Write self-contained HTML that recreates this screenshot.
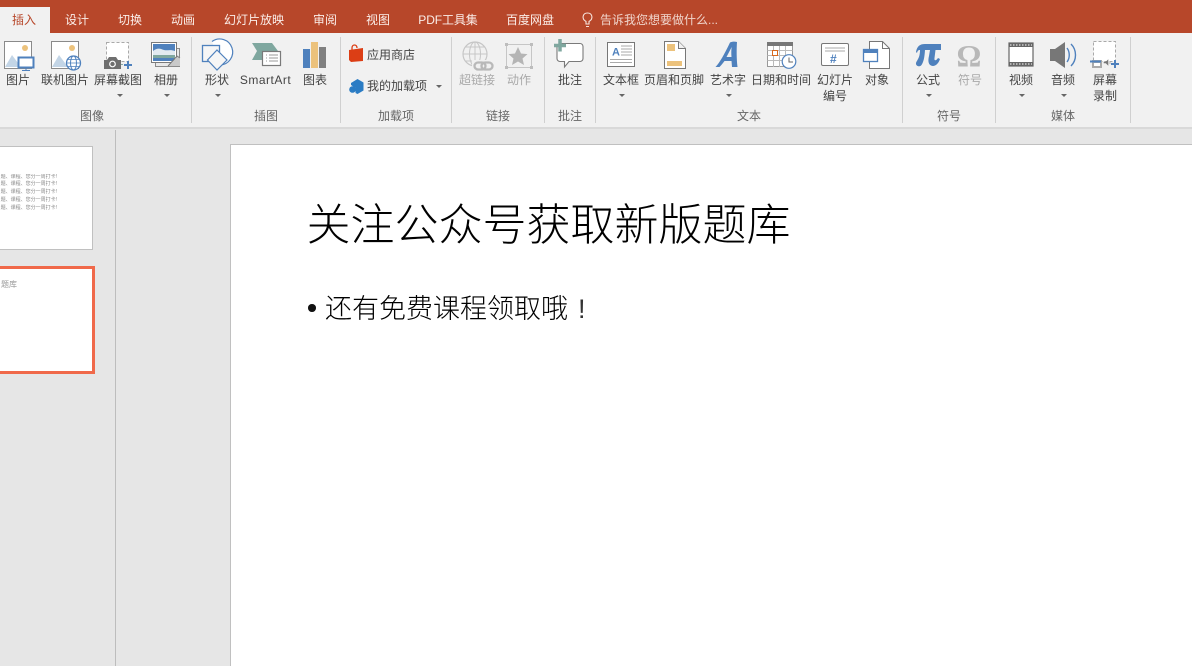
<!DOCTYPE html>
<html lang="zh"><head><meta charset="utf-8"><title>PowerPoint</title>
<style>
*{margin:0;padding:0;box-sizing:border-box}
html,body{width:1192px;height:666px;overflow:hidden;background:#e6e6e6}
body{position:relative;font-family:"Liberation Sans","Noto Sans CJK SC",sans-serif;font-size:12px;color:#444}
.a{position:absolute}
.t{position:absolute;transform:translateX(-50%);white-space:nowrap;line-height:16px;font-size:12px;text-align:center}
.tab{position:absolute;top:12px;transform:translateX(-50%);color:#fbeee9;line-height:16px;white-space:nowrap;font-size:12px}
.g{color:#666}
.d{color:#a9a9a9}
.sep{position:absolute;top:37px;width:1px;height:86px;background:#d0d0d0}
.ar{position:absolute;top:94px;width:0;height:0;border:3px solid transparent;border-top:3px solid #666;border-bottom:0}
svg{position:absolute;left:0;top:0}
</style></head><body>
<div class="a" style="left:0;top:0;width:1192px;height:33px;background:#b7472a"></div>
<div class="a" style="left:0;top:7px;width:50px;height:26px;background:#f1f1f1"></div>
<div class="a" style="left:0;top:33px;width:1192px;height:94px;background:#f1f1f1"></div>
<div class="a" style="left:0;top:127px;width:1192px;height:2px;background:#d9d9d9"></div>

<div class="tab" style="left:24px;color:#b7472a">插入</div>
<div class="tab" style="left:77px">设计</div>
<div class="tab" style="left:130px">切换</div>
<div class="tab" style="left:183px">动画</div>
<div class="tab" style="left:254px">幻灯片放映</div>
<div class="tab" style="left:325px">审阅</div>
<div class="tab" style="left:378px">视图</div>
<div class="tab" style="left:448px;letter-spacing:-.1px">PDF工具集</div>
<div class="tab" style="left:530px">百度网盘</div>
<div class="tab" style="left:659px;color:#f0d5cc">告诉我您想要做什么...</div>

<div class="sep" style="left:191px"></div><div class="sep" style="left:340px"></div><div class="sep" style="left:451px"></div><div class="sep" style="left:544px"></div><div class="sep" style="left:595px"></div><div class="sep" style="left:902px"></div><div class="sep" style="left:995px"></div><div class="sep" style="left:1130px"></div>

<div class="t" style="left:18px;top:72px">图片</div>
<div class="t" style="left:65px;top:72px">联机图片</div>
<div class="t" style="left:118px;top:72px">屏幕截图</div>
<div class="t" style="left:166px;top:72px">相册</div>
<div class="t" style="left:217px;top:72px">形状</div>
<div class="t" style="left:265.500px;top:72px;letter-spacing:.5px">SmartArt</div>
<div class="t" style="left:315px;top:72px">图表</div>
<div class="t" style="left:391px;top:47px">应用商店</div>
<div class="t" style="left:397px;top:78px">我的加载项</div>
<div class="t d" style="left:477px;top:72px">超链接</div>
<div class="t d" style="left:519px;top:72px">动作</div>
<div class="t" style="left:570px;top:72px">批注</div>
<div class="t" style="left:621px;top:72px">文本框</div>
<div class="t" style="left:674px;top:72px">页眉和页脚</div>
<div class="t" style="left:728px;top:72px">艺术字</div>
<div class="t" style="left:781px;top:72px">日期和时间</div>
<div class="t" style="left:835px;top:72px">幻灯片<br>编号</div>
<div class="t" style="left:877px;top:72px">对象</div>
<div class="t" style="left:928px;top:72px">公式</div>
<div class="t d" style="left:970px;top:72px">符号</div>
<div class="t" style="left:1021px;top:72px">视频</div>
<div class="t" style="left:1063px;top:72px">音频</div>
<div class="t" style="left:1105px;top:72px">屏幕<br>录制</div>

<div class="t g" style="left:92px;top:108px">图像</div>
<div class="t g" style="left:266px;top:108px">插图</div>
<div class="t g" style="left:396px;top:108px">加载项</div>
<div class="t g" style="left:498px;top:108px">链接</div>
<div class="t g" style="left:570px;top:108px">批注</div>
<div class="t g" style="left:749px;top:108px">文本</div>
<div class="t g" style="left:949px;top:108px">符号</div>
<div class="t g" style="left:1063px;top:108px">媒体</div>

<div class="ar" style="left:117px"></div><div class="ar" style="left:164px"></div><div class="ar" style="left:215px"></div><div class="ar" style="left:619px"></div><div class="ar" style="left:726px"></div><div class="ar" style="left:926px"></div><div class="ar" style="left:1019px"></div><div class="ar" style="left:1061px"></div><div class="ar" style="left:436px;top:85px"></div>

<svg width="1192" height="130" viewBox="0 0 1192 130" fill="none">
<!-- tell me bulb -->
<path d="M586 24v-2.500c-5-3-3-8.500 1.500-8.500s6.500 5.500 1.500 8.500V24z" stroke="#f6e3dc" stroke-width="1.100"/><path d="M586 26.500h3" stroke="#f6e3dc"/>
<!-- picture -->
<rect x="4.500" y="41.500" width="27" height="27" fill="#fff" stroke="#8a8a8a"/><circle cx="25" cy="48" r="3" fill="#ecc27c"/><path d="M5 67l7-12 9 12z" fill="#c3d5e6"/><rect x="18.500" y="57.500" width="15" height="10" fill="#fff" stroke="#4f81bd" stroke-width="2"/><path d="M26 68v2M22 70.500h8" stroke="#4f81bd"/>
<!-- online -->
<rect x="51.500" y="41.500" width="27" height="27" fill="#fff" stroke="#8a8a8a"/><circle cx="72" cy="48" r="3" fill="#ecc27c"/><path d="M52 67l7-12 9 12z" fill="#c3d5e6"/><circle cx="73.500" cy="63" r="7" fill="#fff" stroke="#4f81bd" stroke-width="1.300"/><ellipse cx="73.500" cy="63" rx="3" ry="7" stroke="#4f81bd"/><path d="M66.500 63h14M67.500 59.500h12M67.500 66.500h12" stroke="#4f81bd" stroke-width=".8"/>
<!-- screenshot -->
<rect x="106.500" y="42.500" width="22" height="19" fill="#fff" stroke="#a9a9a9" stroke-dasharray="3 2"/><path d="M104 60h3l2-3h7l2 3h3v9h-17z" fill="#6f6f6f"/><circle cx="112.500" cy="64" r="2.800" fill="#6f6f6f" stroke="#fff" stroke-width="1.200"/><path d="M121 64.500h2" stroke="#8aa"/><path d="M128 61v8M124 65h8" stroke="#4f81bd" stroke-width="2"/>
<!-- album -->
<rect x="155.500" y="48.500" width="24" height="18" fill="#e8e8e8" stroke="#8a8a8a"/><rect x="151.500" y="42.500" width="25" height="20" fill="#fff" stroke="#7a7a7a"/><rect x="153" y="44" width="22" height="8" fill="#4f81bd"/><path d="M153 51c5-4 8-2 11-1s6-1 11 1v4h-22z" fill="#e2eaf1"/><rect x="153" y="55" width="22" height="3" fill="#7fa79f"/><rect x="153" y="58" width="22" height="3" fill="#4f81bd"/><path d="M168 66l9-9h3v9z" fill="#c9c9c9"/><path d="M168 66l9-10 3 2" stroke="#777"/>
<!-- shapes -->
<path d="M212 41.500a13 13 0 1 1 8 23.500" fill="#fff" stroke="#4f81bd" stroke-width="1.200"/><rect x="202.500" y="45.500" width="17" height="16" fill="#f6f6f6" stroke="#4f81bd" stroke-width="1.300"/><path d="M217 50l10 10-10 10-9.500-10z" fill="#f6f6f6" stroke="#4f81bd" stroke-width="1.200"/>
<!-- smartart -->
<path d="M252 43h20l6 8-6 9h-20l5-9z" fill="#7fa79f"/><rect x="262.500" y="51.500" width="18" height="14" fill="#fff" stroke="#7a7a7a" stroke-width="1.200"/><path d="M266 55h1M269 55h9M266 58h1M269 58h9M266 61h1M269 61h9" stroke="#999"/>
<!-- chart -->
<rect x="303" y="49" width="7" height="19" fill="#4f81bd"/><rect x="311" y="42" width="7" height="26" fill="#ecc27c"/><rect x="319" y="47" width="7" height="21" fill="#808080"/>
<!-- store -->
<path d="M349 50l14-2v13l-12 1-2-2z" fill="#dc3e15"/><path d="M352 50v-2c0-4 5-4 5 0" stroke="#dc3e15" stroke-width="1.300"/>
<!-- add-ins -->
<path d="M351 83l6.500-4 6 3.500v8l-6 3.500-2-1v-5l-4.500-3z" fill="#2b7cc4"/><circle cx="352.500" cy="89.500" r="3.300" fill="#2b7cc4"/>
<!-- hyperlink -->
<circle cx="475" cy="54" r="12" stroke="#c6c6c6" stroke-width="1.200"/><ellipse cx="475" cy="54" rx="5.500" ry="12" stroke="#c6c6c6"/><path d="M475 42v24M463 54h24M465 47h20M465 61h20" stroke="#c6c6c6"/>
<rect x="472" y="60" width="22" height="12" fill="#f1f1f1"/><rect x="474.500" y="62.500" width="11" height="7" rx="3.500" stroke="#b9b9b9" stroke-width="2.300"/><rect x="481.500" y="62.500" width="11" height="7" rx="3.500" stroke="#b9b9b9" stroke-width="2.300"/>
<!-- action -->
<rect x="506.500" y="44.500" width="25" height="23" stroke="#c6c6c6"/><path d="M505 43h3v3h-3zM530 43h3v3h-3zM505 66h3v3h-3zM530 66h3v3h-3z" fill="#bdbdbd"/><path d="M518 47l3 6.500 6.500.6-5 4.400 1.500 6.500-6-3.500-6 3.500 1.500-6.500-5-4.400 6.500-.6z" fill="#b5b5b5"/>
<!-- comment -->
<path d="M560 43.500h20a3 3 0 0 1 3 3v12a3 3 0 0 1-3 3h-11l-4.500 5.500v-5.500H560a3 3 0 0 1-3-3V46z" fill="#fff" stroke="#7a7a7a" stroke-width="1.100"/><path d="M560 39v12.500M554 45.500h12" stroke="#7fa79f" stroke-width="3.500"/>
<!-- textbox -->
<rect x="607.500" y="42.500" width="27" height="24" fill="#fff" stroke="#777"/><text x="612" y="55.500" font-family="Liberation Sans" font-size="11" font-weight="700" fill="#4f81bd">A</text><path d="M621 46h11M621 49h11M621 52h11M621 55h11M610 59.500h22M610 62.500h22" stroke="#aaa"/>
<!-- header -->
<path d="M664.500 41.500h14l7 7v20h-21z" fill="#fff" stroke="#777"/><path d="M678.500 41.500v7h7" stroke="#777" fill="#f1f1f1"/><rect x="667" y="44" width="8" height="7" fill="#ecc27c"/><rect x="667" y="61" width="15" height="5" fill="#ecc27c"/>
<!-- wordart -->
<path fill-rule="evenodd" d="M730 42.500c2-1 5-1 7-.5-.5 7-.5 17 .5 25h-5.500l-.5-6h-7c-1.500 2-3 4-5 6h-4c4-4 9-13 14.500-24.500zM726.500 57h5c-.3-3-.3-7 .2-10z" fill="#4f81bd"/>
<!-- date -->
<rect x="767.500" y="42.500" width="25" height="24" fill="#fff" stroke="#999"/><rect x="767" y="42" width="26" height="4" fill="#777"/><path d="M767.500 50.500h25M767.500 55.500h25M767.500 60.500h25M773.500 46v21M779.500 46v21M785.500 46v21" stroke="#bbb"/><rect x="772.500" y="50.500" width="5" height="5" fill="#fff" stroke="#d9691e"/><circle cx="789" cy="61.500" r="6.800" fill="#fff" stroke="#4f81bd" stroke-width="1.200"/><path d="M789 57.500v4.500h4" stroke="#666"/>
<!-- slide num -->
<rect x="821.500" y="43.500" width="27" height="22" rx="1.500" fill="#fff" stroke="#777"/><path d="M825 48h20M825 51h20" stroke="#aaa"/><text x="830" y="63" font-family="Liberation Sans" font-size="12" font-weight="700" fill="#4f81bd">#</text>
<!-- object -->
<path d="M869.500 41.500h13l7 7v20h-20z" fill="#fff" stroke="#777"/><path d="M882.500 41.500v7h7" stroke="#777"/><rect x="863.500" y="49.500" width="14" height="12" fill="#fff" stroke="#4f81bd" stroke-width="1.300"/><rect x="863" y="49" width="15" height="4" fill="#4f81bd"/>
<!-- pi icon -->
<path d="M916 52C917 46 920 44 925 44H941V50H935.500L934.500 58C934 61 936 61 938 58L940 59C938 65 934 67 931 65.500 928 64 928 60 929 56L930 50H925C924.500 58 923.500 62 921.500 65 919.500 67.500 915.500 66 916 63 917 60 920 58 920 50 918 50 917.500 51 917 53z" fill="#4f81bd"/>
<text x="956.500" y="66" font-family="Liberation Serif" font-size="31" font-weight="700" fill="#b8b8b8">Ω</text>
<!-- video -->
<rect x="1009" y="43" width="24" height="23" fill="#fff" stroke="#666" stroke-width="1.200"/><rect x="1009" y="43" width="24" height="4" fill="#666"/><rect x="1009" y="62" width="24" height="4" fill="#666"/><path d="M1010 45h22M1010 64h22" stroke="#fff" stroke-dasharray="1.500 1.500"/>
<!-- audio -->
<path d="M1050 49h5l10-7v26l-10-7h-5z" fill="#777"/><path d="M1067 48c3 4 3 10 0 14M1071 44c6 6 6 16 0 22" stroke="#4f81bd" stroke-width="1.400"/>
<!-- screen rec -->
<rect x="1093.500" y="41.500" width="22" height="20" fill="#fff" stroke="#a9a9a9" stroke-dasharray="3 2"/><rect x="1092" y="60" width="10" height="8" fill="#aaa"/><rect x="1094" y="63" width="6" height="3" fill="#fff"/><path d="M1090 61.500h11" stroke="#4f81bd" stroke-width="2"/><path d="M1104 62h2l2-2v5l-2-2h-2zM1109 63h2" fill="#777" stroke="#777" stroke-width=".6"/><path d="M1115 60v8M1111 64h8" stroke="#4f81bd" stroke-width="2"/>
</svg>

<!-- panes -->
<div class="a" style="left:115px;top:130px;width:1px;height:536px;background:#bdbdbd"></div>
<div class="a" style="left:-10px;top:146px;width:103px;height:104px;background:#fff;border:1px solid #c0c0c0"></div>
<div class="a" style="left:-10px;top:266px;width:105px;height:108px;background:#fff;border:3px solid #f0694a"></div>
<div class="a" style="left:0;top:173.500px;width:57px;overflow:hidden;font-size:5px;line-height:7.800px;color:#888;white-space:nowrap;text-align:right">题、课程、您分一周打卡!<br>题、课程、您分一周打卡!<br>题、课程、您分一周打卡!<br>题、课程、您分一周打卡!<br>题、课程、您分一周打卡!</div>
<div class="a" style="left:1px;top:280px;font-size:8px;line-height:10px;color:#999;white-space:nowrap">题库</div>

<div class="a" style="left:230px;top:144px;width:970px;height:530px;background:#fff;border:1px solid #c0c0c0"></div>
<div class="a" style="left:306.500px;top:198px;font-size:44px;line-height:56px;font-weight:300;color:#000;white-space:nowrap;font-family:'Liberation Sans','Noto Sans CJK SC',sans-serif">关注公众号获取新版题库</div>
<div class="a" style="left:308px;top:304px;width:7.500px;height:7.500px;border-radius:50%;background:#111"></div>
<div class="a" style="left:325px;top:290px;font-size:27px;line-height:38px;font-weight:300;color:#000;white-space:nowrap">还有免费课程领取哦<span style="margin-left:10px;color:#333">!</span></div>
</body></html>
